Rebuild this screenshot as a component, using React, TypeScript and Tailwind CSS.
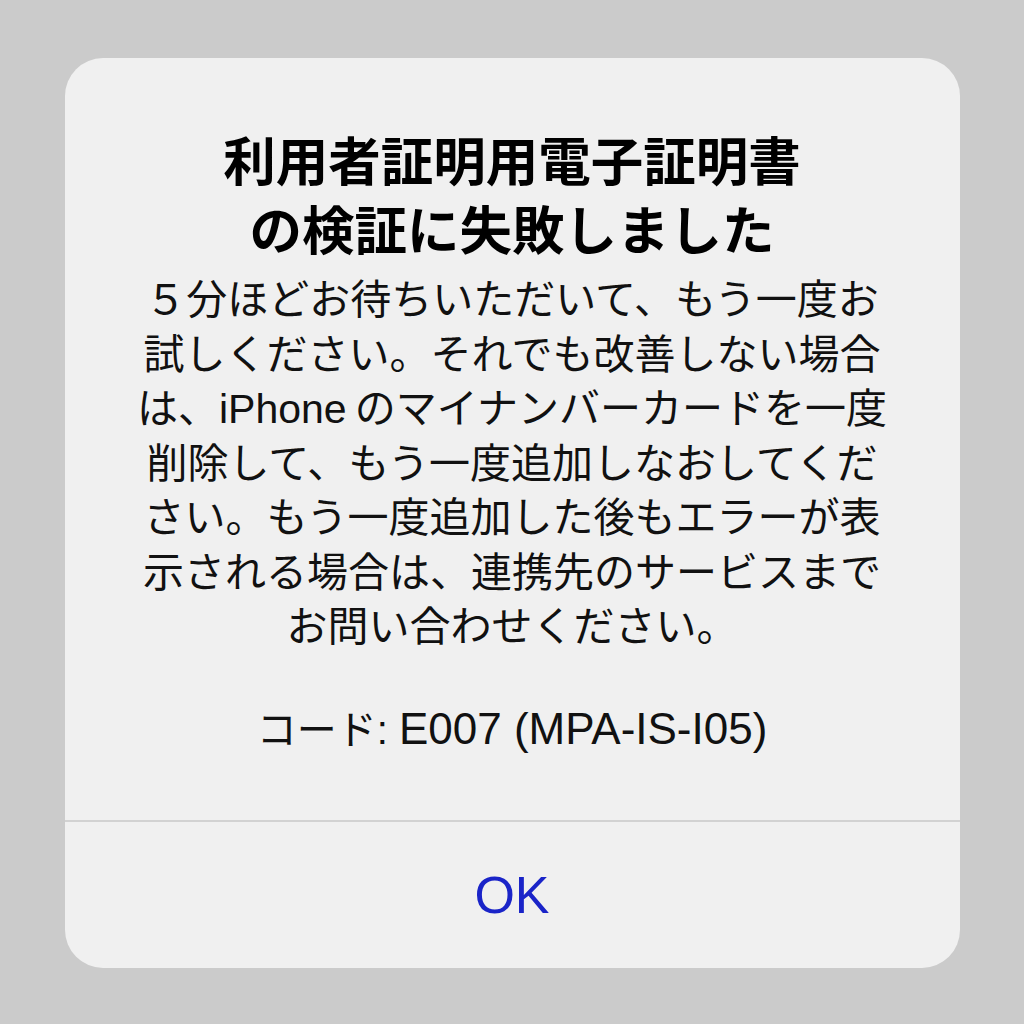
const BODY_LINES = [
  "５分ほどお待ちいただいて、もう一度お",
  "試しください。それでも改善しない場合",
  "は、iPhone\u2009のマイナンバーカードを一度",
  "削除して、もう一度追加しなおしてくだ",
  "さい。もう一度追加した後もエラーが表",
  "示される場合は、連携先のサービスまで",
  "お問い合わせください。",
];

export default function App() {
  return (
    <div
      className="w-[1024px] h-[1024px] bg-[#cbcbcb] flex justify-center pt-[58px]"
      style={{ fontFamily: '"Liberation Sans", "Noto Sans CJK JP", sans-serif' }}
    >
      <div className="w-[895px] h-[910px] bg-[#f0f0f0] rounded-[38px] flex flex-col overflow-hidden">
        <div className="flex-1 flex flex-col items-center pt-[70px]">
          <h1 className="text-[52.5px] leading-[69px] font-bold text-black text-center">
            <div>利用者証明用電子証明書</div>
            <div>の検証に失敗しました</div>
          </h1>
          <div className="mt-[7px] text-[41px] leading-[54.5px] text-[#111] text-center whitespace-nowrap">
            {BODY_LINES.map((line) => (
              <div key={line}>{line}</div>
            ))}
          </div>
          <div className="mt-[47px] text-[40px] leading-[54px] text-[#111] text-center">
            コード: <span className="text-[44px]">E007 (MPA-IS-I05)</span>
          </div>
        </div>
        <div className="h-[2px] bg-[#d2d2d2]" />
        <button className="h-[146px] w-full flex items-center justify-center text-[52px] text-[#1a24c8]">
          OK
        </button>
      </div>
    </div>
  );
}
